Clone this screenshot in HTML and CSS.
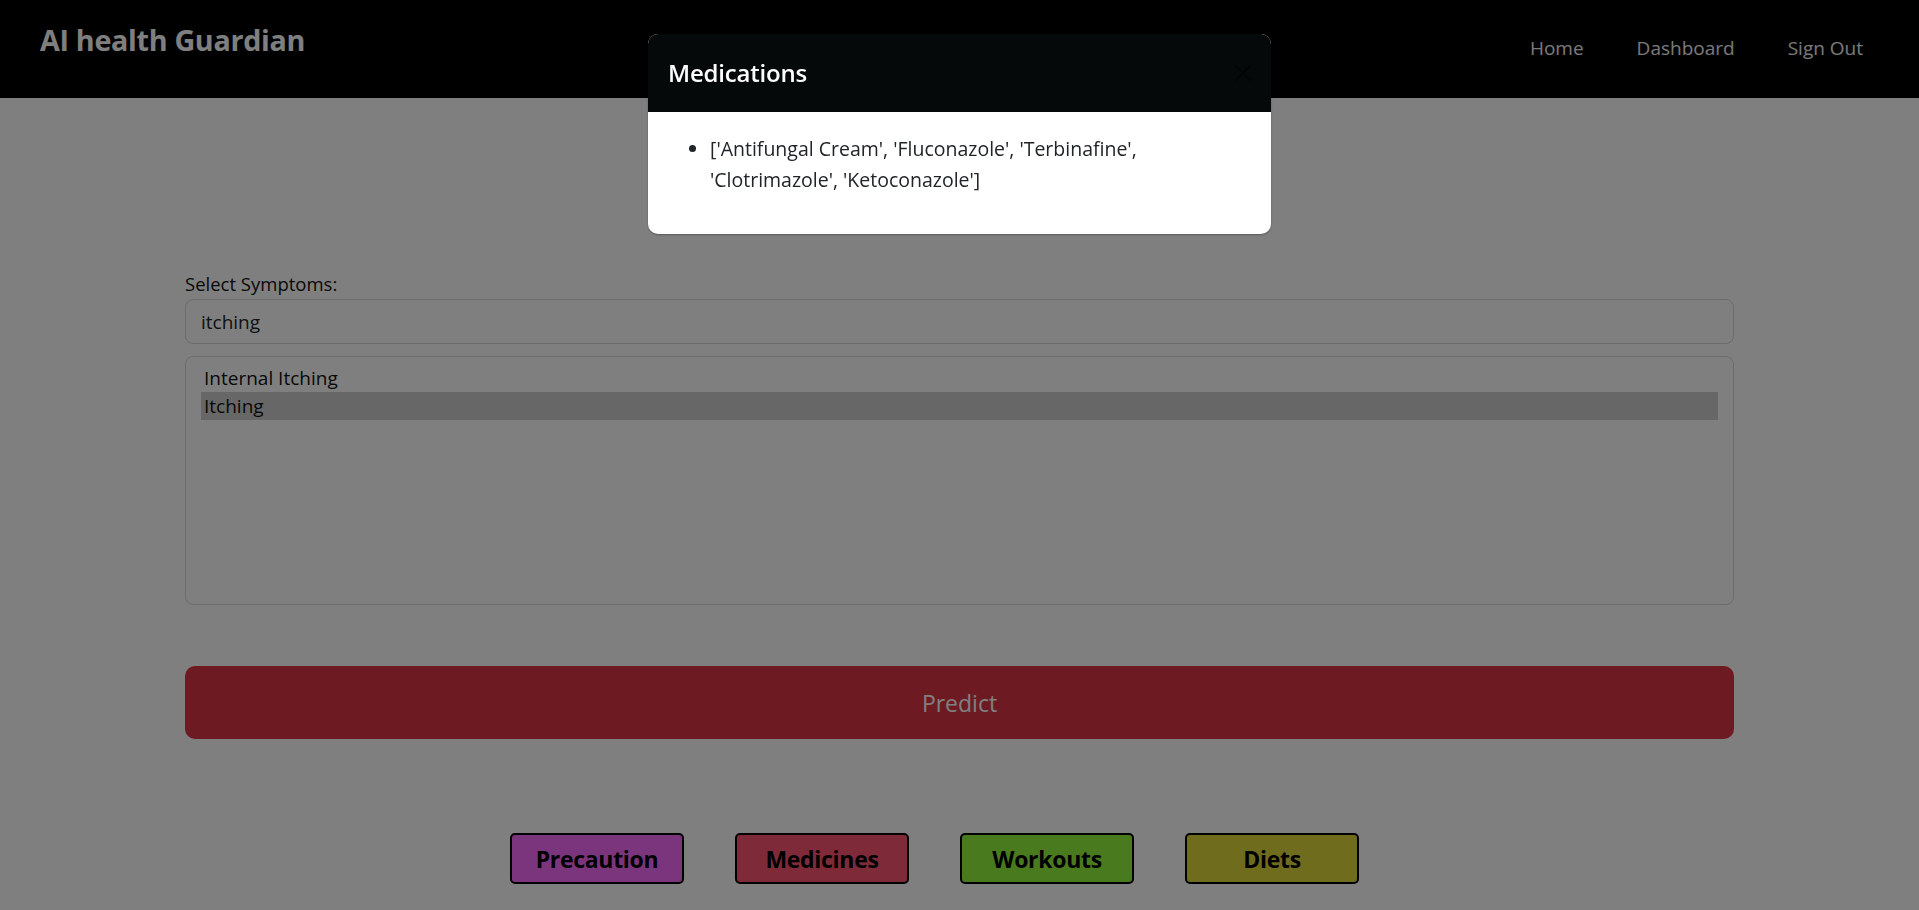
FILE: index.html
```html
<!DOCTYPE html>
<html lang="en">
<head>
<meta charset="utf-8">
<title>AI health Guardian</title>
<link rel="stylesheet" href="styles.css">
</head>
<body>
<nav class="navbar">
  <div class="brand">AI health Guardian</div>
  <ul class="nav-links">
    <li><a href="#">Home</a></li>
    <li><a href="#">Dashboard</a></li>
    <li><a href="#">Sign Out</a></li>
  </ul>
</nav>

<main class="container">
  <label class="field-label" for="symptom-search">Select Symptoms:</label>
  <input id="symptom-search" class="search" type="text" value="itching">
  <div class="listbox">
    <div class="option">Internal Itching</div>
    <div class="option selected">Itching</div>
  </div>
  <button class="predict" type="button">Predict</button>
  <div class="tabs">
    <button class="tab tab-precaution" type="button">Precaution</button>
    <button class="tab tab-medicines" type="button">Medicines</button>
    <button class="tab tab-workouts" type="button">Workouts</button>
    <button class="tab tab-diets" type="button">Diets</button>
  </div>
</main>

<div class="backdrop"></div>

<div class="modal">
  <div class="modal-content">
    <div class="modal-header">
      <h5 class="modal-title">Medications</h5>
      <button class="btn-close" type="button" aria-label="Close">
        <svg viewBox="0 0 16 16" width="20" height="20"><path d="M2 2 L14 14 M14 2 L2 14" stroke="#000" stroke-width="1.6" fill="none"/></svg>
      </button>
    </div>
    <div class="modal-body">
      <ul class="med-list">
        <li>['Antifungal Cream', 'Fluconazole', 'Terbinafine', 'Clotrimazole', 'Ketoconazole']</li>
      </ul>
    </div>
  </div>
</div>
</body>
</html>
```

FILE: styles.css
```css
* { box-sizing: border-box; }

html, body {
  margin: 0;
  padding: 0;
}

body {
  background: #ffffff;
  color: #212529;
  font-family: "Open Sans", "Noto Sans", sans-serif;
  font-size: 19px;
  line-height: 1.5;
  overflow: hidden;
  height: 910px;
}

.navbar {
  height: 98px;
  background: #000;
  display: flex;
  justify-content: space-between;
  align-items: flex-start;
  padding: 0 56px 0 40px;
}

.brand {
  margin-top: 23px;
  font-size: 28.7px;
  line-height: 34px;
  font-weight: 700;
  color: #ffffff;
  letter-spacing: -0.3px;
}

.nav-links {
  list-style: none;
  margin: 34px 0 0 0;
  padding: 0;
  display: flex;
  gap: 53px;
}

.nav-links a {
  color: #f2f2f2;
  text-decoration: none;
  font-size: 19px;
  line-height: 26px;
}

.container {
  width: 1549px;
  margin: 0 auto;
  padding-top: 171px;
  display: flex;
  flex-direction: column;
}

.field-label {
  font-size: 18.5px;
  line-height: 30px;
  color: #111;
}

.search {
  height: 45px;
  border: 1px solid #d4d8dc;
  border-radius: 8px;
  padding: 0 15px;
  font-family: inherit;
  font-size: 19px;
  color: #212529;
  background: #fff;
  outline: none;
}

.listbox {
  margin-top: 12px;
  height: 249px;
  border: 1px solid #d4d8dc;
  border-radius: 8px;
  padding: 7px 15px;
}

.option {
  height: 28px;
  line-height: 28px;
  padding-left: 3px;
  font-size: 19px;
  color: #111;
}

.option.selected {
  background: #cecece;
}

.predict {
  margin-top: 61px;
  height: 73px;
  border: none;
  border-radius: 10px;
  background: #dc3545;
  color: #ffffff;
  font-family: inherit;
  font-size: 23px;
}

.tabs {
  margin-top: 94px;
  display: flex;
  justify-content: center;
  gap: 51px;
  padding-right: 50px;
}

.tab {
  width: 174px;
  height: 51px;
  border: 2px solid #000;
  border-radius: 5px;
  font-family: inherit;
  font-size: 23px;
  font-weight: 700;
  color: #000;
  letter-spacing: -0.3px;
}

.tab-precaution { background: #f66af9; }
.tab-medicines  { background: #ff5470; }
.tab-workouts   { background: #95f43d; }
.tab-diets      { background: #ded93d; }

.backdrop {
  position: fixed;
  inset: 0;
  background: rgba(0, 0, 0, 0.5);
}

.modal {
  position: fixed;
  top: 34px;
  left: 0;
  right: 0;
  display: flex;
  justify-content: center;
}

.modal-content {
  width: 623px;
  background: #fff;
  border-radius: 10px;
  overflow: hidden;
  box-shadow: 0 1px 2px rgba(0, 0, 0, 0.3);
}

.modal-header {
  height: 78px;
  background: #05090a;
  display: flex;
  align-items: center;
  justify-content: space-between;
  padding: 0 20px;
}

.modal-title {
  margin: 0;
  font-size: 24px;
  font-weight: 600;
  color: #fff;
  letter-spacing: -0.2px;
}

.btn-close {
  width: 24px;
  height: 24px;
  border: none;
  background: none;
  padding: 0;
  margin-right: -4px;
  opacity: 0.5;
  display: flex;
  align-items: center;
  justify-content: center;
}

.modal-body {
  padding: 21px 20px 20px 20px;
}

.med-list {
  margin: 0 0 19px 0;
  padding-left: 42px;
  font-size: 19.5px;
  line-height: 31px;
  color: #212529;
}
```
